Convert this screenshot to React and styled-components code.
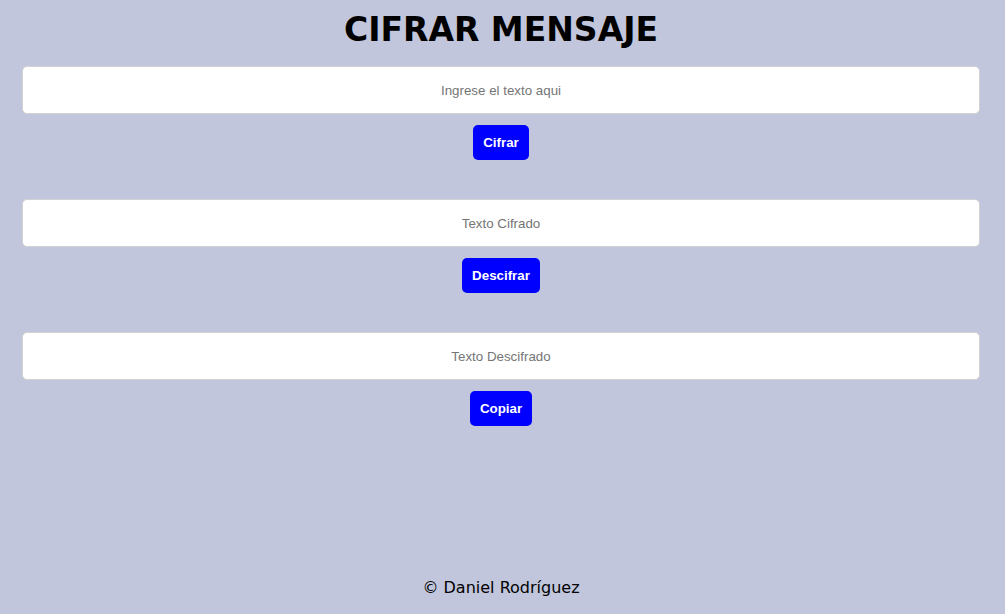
import React from 'react'
import styled, { createGlobalStyle } from 'styled-components'

const GlobalStyle = createGlobalStyle`
  html, body {
    margin: 0;
    padding: 0;
    background: #c1c6dc;
  }
`

const sections = [
  { placeholder: 'Ingrese el texto aqui', label: 'Cifrar' },
  { placeholder: 'Texto Cifrado', label: 'Descifrar' },
  { placeholder: 'Texto Descifrado', label: 'Copiar' },
]

const App = () => {
  return (
    <>
      <GlobalStyle />
      <Page>
        <Title>CIFRAR MENSAJE</Title>
        {sections.map((s) => (
          <Section key={s.label}>
            <Field type="text" placeholder={s.placeholder} />
            <Button>{s.label}</Button>
          </Section>
        ))}
        <Footer>© Daniel Rodríguez</Footer>
      </Page>
    </>
  )
}

const Page = styled.div`
  min-height: 100vh;
  box-sizing: border-box;
  display: flex;
  flex-direction: column;
  align-items: center;
  padding: 11px 25px 17px 22px;
`

const Title = styled.h1`
  font-family: "DejaVu Sans", Verdana, sans-serif;
  font-size: 33px;
  font-weight: bold;
  line-height: 38px;
  color: #000;
  margin: 0 0 17px;
`

const Section = styled.div`
  width: 100%;
  display: flex;
  flex-direction: column;
  align-items: center;
  gap: 11px;
  margin-bottom: 39px;
`

const Field = styled.input`
  width: 100%;
  height: 48px;
  box-sizing: border-box;
  border: 1px solid #d2d2d2;
  border-radius: 5px;
  background: #fff;
  text-align: center;
  font-family: "Liberation Sans", Arial, sans-serif;
  font-size: 13.33px;
  outline: none;

  &::placeholder {
    color: #757575;
  }
`

const Button = styled.button`
  background: #0000ff;
  color: #fff;
  border: none;
  border-radius: 5px;
  padding: 10px;
  font-family: "Liberation Sans", Arial, sans-serif;
  font-size: 13.33px;
  font-weight: bold;
  line-height: 15px;
  cursor: pointer;
`

const Footer = styled.footer`
  margin-top: auto;
  font-family: "DejaVu Sans", Verdana, sans-serif;
  font-size: 16px;
  color: #000;
`

export default App
